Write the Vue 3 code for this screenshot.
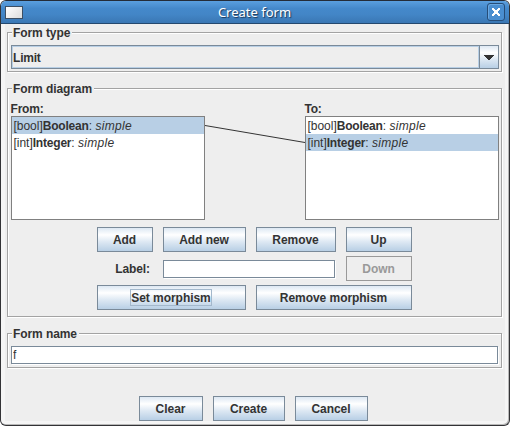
<script setup>
import { ref } from 'vue'

const items = [
  { tag: '[bool]', name: 'Boolean' },
  { tag: '[int]', name: 'Integer' },
]
const from = ref(0)
const to = ref(1)
const label = ref('')
const name = ref('f')
</script>

<template>
  <div class="window">
    <header class="titlebar">
      <i class="menu-icon"></i>
      <span class="title">Create form</span>
      <button class="close">
        <svg width="8" height="8" viewBox="0 0 8 8" shape-rendering="crispEdges">
          <path fill="#fff" d="M0 0h2v1h1v1h2V1h1V0h2v2H7v1H6v2h1v1h1v2H6V7H5V6H3v1H2v1H0V6h1V5h1V3H1V2H0z" />
        </svg>
      </button>
    </header>

    <main class="body">
      <section class="group type">
        <h2 class="legend">Form type</h2>
        <div class="combo">
          <div class="value">Limit</div>
          <div class="arrow">
            <svg width="10" height="5" viewBox="0 0 10 5" shape-rendering="crispEdges">
              <path fill="#333" d="M0 0h10v1H9v1H8v1H7v1H6v1H4V4H3V3H2V2H1V1H0z" />
            </svg>
          </div>
        </div>
      </section>

      <section class="group diagram">
        <h2 class="legend">Form diagram</h2>
        <div class="lists">
          <div class="col">
            <div class="caption">From:</div>
            <ul class="list">
              <li v-for="(it, i) in items" :key="i" :class="{ selected: i === from }" @click="from = i">{{ it.tag }}<b>{{ it.name }}</b>: <em>simple</em></li>
            </ul>
          </div>
          <svg class="link" width="100" height="104" viewBox="0 0 100 104">
            <line x1="0" :y1="9.5 + from * 17" x2="100" :y2="9.5 + to * 17" stroke="#333" stroke-width="1" />
          </svg>
          <div class="col">
            <div class="caption">To:</div>
            <ul class="list">
              <li v-for="(it, i) in items" :key="i" :class="{ selected: i === to }" @click="to = i">{{ it.tag }}<b>{{ it.name }}</b>: <em>simple</em></li>
            </ul>
          </div>
        </div>
        <div class="controls">
          <button class="btn">Add</button>
          <button class="btn">Add new</button>
          <button class="btn">Remove</button>
          <button class="btn">Up</button>
          <label class="label" for="label">Label:</label>
          <input id="label" v-model="label" class="field span2" />
          <button class="btn" disabled>Down</button>
          <button class="btn span2"><span class="focus">Set morphism</span></button>
          <button class="btn span2">Remove morphism</button>
        </div>
      </section>

      <section class="group name">
        <h2 class="legend">Form name</h2>
        <input v-model="name" class="field" />
      </section>

      <footer class="actions">
        <button class="btn">Clear</button>
        <button class="btn">Create</button>
        <button class="btn">Cancel</button>
      </footer>
    </main>
  </div>
</template>

<style>
body { background: #fff; overflow: hidden; }
</style>

<style scoped>
* { box-sizing: border-box; }
.window {
  width: 510px;
  height: 426px;
  display: flex;
  flex-direction: column;
  border: 1px solid #333336;
  border-top-color: #242c38;
  border-radius: 6px;
  overflow: hidden;
  background: #f5f5f5;
  box-shadow: inset -1px -1px 0 #b8b8b8;
  font: 12px/14px "Liberation Sans", Arial, sans-serif;
  color: #333;
}
.titlebar {
  height: 23px;
  flex: none;
  display: flex;
  align-items: center;
  padding: 0 4px;
  background: linear-gradient(#5a9fdf, #4488ca 35%, #4386c7 60%, #3a77b4);
  border-bottom: 1px solid #24486e;
}
.menu-icon {
  width: 18px;
  height: 13px;
  border: 1px solid #3d4f63;
  background: linear-gradient(135deg, #fff, #dcdcdc);
}
.title {
  flex: 1;
  text-align: center;
  padding-right: 1px;
  font: 13px/20px "Noto Sans", sans-serif;
  color: #fff;
  text-shadow: 1px 1px 1px #1c3655;
}
.close {
  width: 18px;
  height: 18px;
  padding: 0;
  display: flex;
  align-items: center;
  justify-content: center;
  border: 1px solid #264d78;
  border-radius: 3px;
  background: #4a8ed0;
  box-shadow: inset 1px 1px 0 #6aa8e2;
}
.body {
  flex: 1;
  margin: 0 4px 4px;
  padding: 8px 3px 0 2px;
  background: #eee;
}
.group {
  width: 495px;
  padding: 0 3px;
  border: 1px solid #a3a3a3;
  box-shadow: 1px 1px 0 #fff, inset 1px 1px 0 #fff;
}
.legend {
  width: fit-content;
  height: 14px;
  margin: -7px 0 0 1px;
  padding: 0 2px 0 1px;
  background: #eee;
  font: bold 12px/14px "Liberation Sans", Arial, sans-serif;
  letter-spacing: -0.08px;
}
.type { height: 40px; }
.combo {
  height: 24px;
  margin-top: 5px;
  width: 488px;
  display: flex;
  border: 1px solid #7a8a99;
}
.value {
  flex: 1;
  border: 1px solid #b8cfe5;
  padding: 4px 0;
  font-weight: bold;
  letter-spacing: -0.2px;
}
.arrow {
  width: 19px;
  border-left: 1px solid #7a8a99;
  display: flex;
  align-items: center;
  justify-content: center;
  background: linear-gradient(#dde8f3, #fff 30%, #dde8f3 60%, #b8cfe5);
}
.diagram { height: 229px; margin-top: 16px; }
.lists { display: flex; align-items: flex-end; margin-top: 6px; width: 488px; }
.col { width: 194px; }
.caption { font-weight: bold; height: 14px; margin-left: -0.5px; letter-spacing: -0.2px; }
.list {
  list-style: none;
  margin: 0;
  padding: 0;
  height: 104px;
  border: 1px solid #808080;
  background: #fff;
}
.list li { height: 17px; line-height: 16px; padding: 1px 0 0 1.4px; white-space: pre; }
.list b { letter-spacing: -0.2px; }
.list em { letter-spacing: 0.3px; }
.list .selected { background: #b8cfe5; }
.controls {
  display: grid;
  grid-template-columns: 56px 83px 80px 66px;
  grid-template-rows: 25px 25px 25px;
  column-gap: 10px;
  row-gap: 4px;
  margin: 7px 0 0 86px;
  align-items: center;
}
.span2 { grid-column: span 2; }
.btn {
  height: 25px;
  padding: 0 1px 0 0;
  display: flex;
  align-items: center;
  justify-content: center;
  border: 1px solid #7a8a99;
  background: linear-gradient(#dde8f3, #fff 30%, #dde8f3 60%, #b8cfe5);
  font: bold 12px/14px "Liberation Sans", Arial, sans-serif;
  letter-spacing: -0.05px;
  color: #333;
}
.btn:disabled { background: #eee; border-color: #999; color: #999; }
.focus {
  height: 17px;
  padding-top: 1px;
  border: 1px solid #a3b8cc;
}
.label { font-weight: bold; text-align: right; padding-right: 3px; letter-spacing: -0.1px; }
.field {
  height: 18px;
  padding: 0 1px;
  border: 1px solid #7a8a99;
  outline: none;
  background: #fff;
  box-shadow: 1px 1px 0 #fff;
  font: 12px/14px "Liberation Sans", Arial, sans-serif;
  color: #333;
}
.controls .field { width: 172px; }
.name { height: 35px; margin-top: 16px; }
.name .field { display: block; width: 487px; margin-top: 5px; }
.actions { display: grid; grid-template-columns: 64px 72px 73px; gap: 10px; margin: 28px 0 0 132px; }
</style>
